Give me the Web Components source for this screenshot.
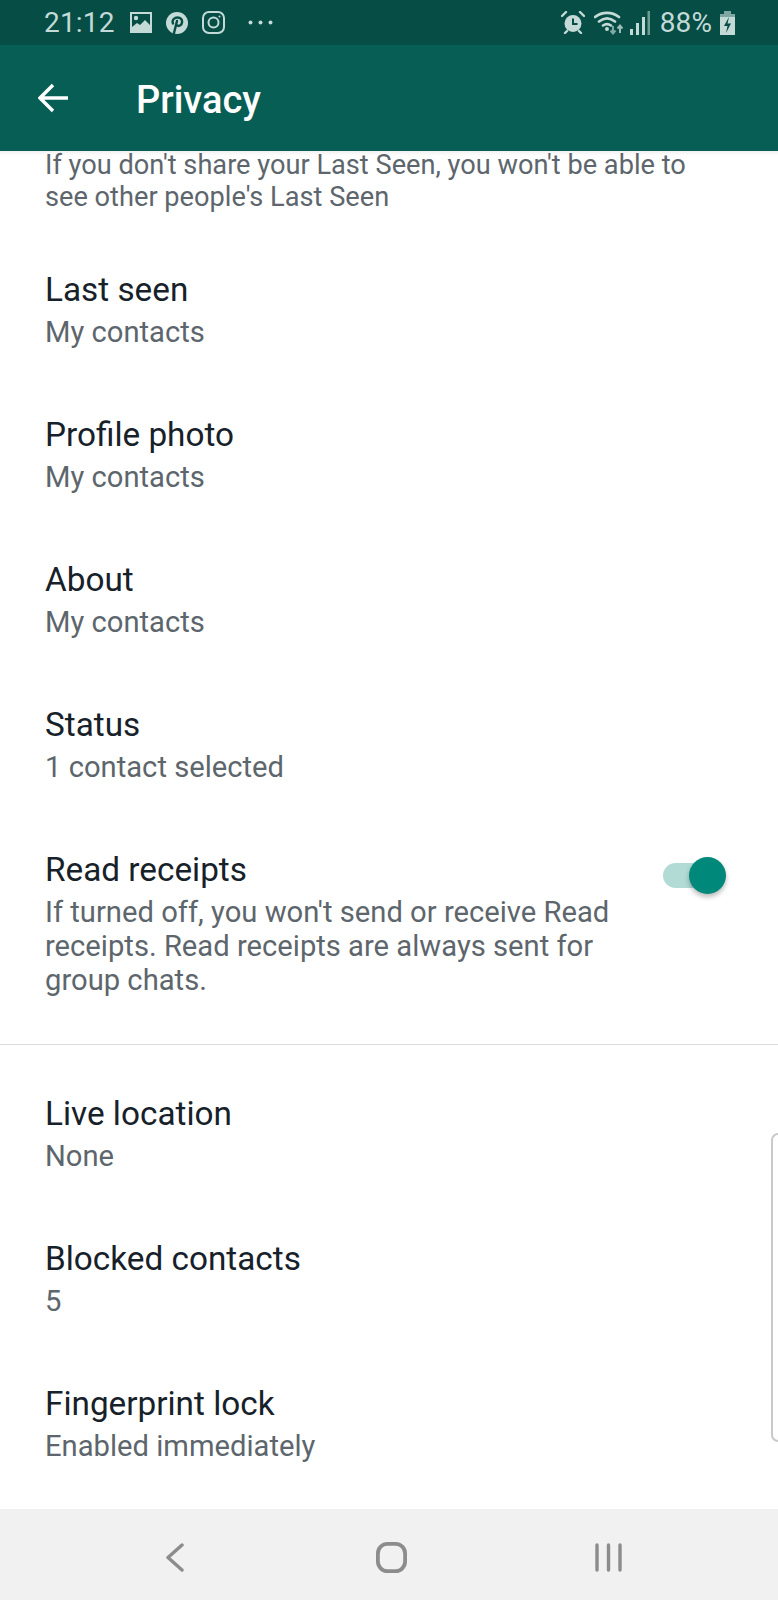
<!DOCTYPE html>
<html>
<head>
<meta charset="utf-8">
<title>Privacy</title>
<style>
html, body { margin: 0; padding: 0; background: #fff; }
body { width: 778px; height: 1600px; overflow: hidden; font-family: Roboto, sans-serif; }
</style>
</head>
<body>
<phone-screen>
  <status-bar slot="top"></status-bar>
  <app-toolbar slot="top">Privacy</app-toolbar>

  <intro-note>If you don't share your Last Seen, you won't be able to see other people's Last Seen</intro-note>

  <privacy-row label="Last seen">My contacts</privacy-row>
  <privacy-row label="Profile photo">My contacts</privacy-row>
  <privacy-row label="About">My contacts</privacy-row>
  <privacy-row label="Status">1 contact selected</privacy-row>
  <privacy-row label="Read receipts">
    If turned off, you won't send or receive Read receipts. Read receipts are always sent for group chats.
    <toggle-switch slot="end"></toggle-switch>
  </privacy-row>
  <list-divider></list-divider>
  <privacy-row label="Live location">None</privacy-row>
  <privacy-row label="Blocked contacts">5</privacy-row>
  <privacy-row label="Fingerprint lock">Enabled immediately</privacy-row>

  <nav-bar slot="bottom"></nav-bar>
</phone-screen>

<script>
class PhoneScreen extends HTMLElement {
  constructor() {
    super();
    this.attachShadow({ mode: "open" }).innerHTML = `
<style>
:host { display: flex; flex-direction: column; width: 778px; height: 1600px; overflow: hidden; background: #fff; }
.list { position: relative; flex: 1; min-height: 0; overflow: hidden; }
.list::before { content: ""; position: absolute; left: 0; right: 0; top: 0; height: 5px; background: linear-gradient(rgba(0,0,0,.06), rgba(0,0,0,0)); z-index: 1; }
.edge { position: absolute; right: 0; top: 982px; width: 5px; height: 305px; border: 2px solid #c9c9c9; border-right: 0; border-radius: 10px 0 0 10px; }
</style>
<slot name="top"></slot>
<div class="list"><slot></slot><div class="edge"></div></div>
<slot name="bottom"></slot>`;
  }
}
customElements.define("phone-screen", PhoneScreen);

class StatusBar extends HTMLElement {
  constructor() {
    super();
    this.attachShadow({ mode: "open" }).innerHTML = `
<style>
:host { display: flex; align-items: center; height: 45px; padding: 0 43px 0 44px; background: #054d45; color: #c3dad6; font-size: 28px; box-sizing: border-box; }
svg { display: block; flex: none; }
.time { width: 72px; line-height: 45px; letter-spacing: .2px; }
.left { display: flex; align-items: center; gap: 14px; flex: 1; }
.right { display: flex; align-items: center; }
.pct { margin: 0 8px 0 10px; line-height: 45px; letter-spacing: .1px; }
</style>
<div class="left">
  <span class="time">21:12</span>
  <svg width="22" height="21" viewBox="0 0 22 21"><path fill="#c3dad6" fill-rule="evenodd" d="M0 0h22v21H0zM2 2v13l5-4 3 2 5-5 5 5V2z"/><circle cx="6" cy="6" r="2.2" fill="#c3dad6"/></svg>
  <svg width="22" height="22" viewBox="0 0 22 22"><circle cx="11" cy="11" r="11" fill="#c3dad6"/><path d="M8 21l3-12M7 11.5C5.5 7.500 9 5.500 11.500 5.500c3 0 5 2 4.500 5-.4 2.500-2.500 4-4.500 3.200-.8-.3-1.200-.9-1.300-1.300" fill="none" stroke="#054d45" stroke-width="2.400" stroke-linecap="round"/></svg>
  <svg width="23" height="23" viewBox="0 0 23 23" fill="none" stroke="#c3dad6" stroke-width="2"><rect x="1" y="1" width="21" height="21" rx="6"/><circle cx="11.500" cy="11.500" r="5"/><circle cx="17.500" cy="5.500" r="1" fill="#c3dad6" stroke="none"/></svg>
  <svg style="margin-left:9px" width="25" height="5" viewBox="0 0 25 5" fill="#c3dad6"><circle cx="2.500" cy="2.500" r="2"/><circle cx="12.500" cy="2.500" r="2"/><circle cx="22.500" cy="2.500" r="2"/></svg>
</div>
<div class="right">
  <svg width="24" height="23" viewBox="0 0 24 23"><circle cx="12" cy="12.500" r="8.500" fill="#c3dad6"/><path d="M12 7.500v5.500h4.500" fill="none" stroke="#054d45" stroke-width="2"/><path d="M1 5l4-4M23 5l-4-4M6 20l-2 2M18 20l2 2" stroke="#c3dad6" stroke-width="2.400" stroke-linecap="round"/></svg>
  <svg style="margin-left:9px" width="29" height="24" viewBox="0 0 29 24" fill="none"><path d="M1 6C8 .5 18 .5 25 6M5 10.500c5-4 11-4 16 0M9 14.500c3-2 5-2 8 0" stroke="#c3dad6" stroke-width="2.600" stroke-linecap="round"/><circle cx="13" cy="18" r="2" fill="#c3dad6"/><path d="M19 15v7m-2.500-2.500l2.500 3 2.500-3" stroke="#7fa8a2" stroke-width="2"/><path d="M26 22v-7m-2.500 2.500l2.500-3 2.500 3" stroke="#9dbcb7" stroke-width="2"/></svg>
  <svg style="margin-left:7px" width="20" height="24" viewBox="0 0 20 24"><rect x="0" y="18" width="3" height="6" fill="#c3dad6"/><rect x="6" y="12" width="3" height="12" fill="#c3dad6"/><rect x="12" y="6" width="3" height="18" fill="#c3dad6"/><rect x="17.500" y="0" width="2.500" height="24" fill="#6f9c95"/></svg>
  <span class="pct">88%</span>
  <svg width="15" height="24" viewBox="0 0 15 24"><rect x="4" y="0" width="7" height="4" fill="#7fa8a2"/><rect x="0" y="3" width="15" height="21" fill="#c3dad6"/><rect x="0" y="3" width="15" height="3" fill="#7fa8a2"/><path d="M9 6l-5 9h3.500L6 22l5-9.500H7.500z" fill="#054d45"/></svg>
</div>`;
  }
}
customElements.define("status-bar", StatusBar);

class AppToolbar extends HTMLElement {
  constructor() {
    super();
    this.attachShadow({ mode: "open" }).innerHTML = `
<style>
:host { display: flex; align-items: center; height: 106px; padding-left: 38px; box-sizing: border-box; background: #075e54; color: #fff; font-size: 38px; font-weight: 500; }
svg { display: block; flex: none; margin-right: 68px; }
span { padding-top: 3px; }
</style>
<svg width="30" height="30" viewBox="0 0 30 30" fill="none" stroke="#fff" stroke-width="3.400"><path d="M30 15H3M15 2L2 15l13 13"/></svg>
<span><slot></slot></span>`;
  }
}
customElements.define("app-toolbar", AppToolbar);

class IntroNote extends HTMLElement {
  constructor() {
    super();
    this.attachShadow({ mode: "open" }).innerHTML = `
<style>
:host { display: block; margin: -2px 0 24px; padding: 0 70px 0 45px; color: #5d666c; font-size: 27.200px; line-height: 32px; }
</style>
<slot></slot>`;
  }
}
customElements.define("intro-note", IntroNote);

class PrivacyRow extends HTMLElement {
  constructor() {
    super();
    this.attachShadow({ mode: "open" }).innerHTML = `
<style>
:host { display: flex; align-items: flex-start; padding: 33px 0 33px 45px; }
.text { width: 580px; }
.title { color: #17212a; font-size: 33.300px; line-height: 40px; margin-bottom: 5px; }
.sub { color: #5d666c; font-size: 29.200px; line-height: 34px; }
</style>
<div class="text">
  <div class="title"></div>
  <div class="sub"><slot></slot></div>
</div>
<slot name="end"></slot>`;
    this.shadowRoot.querySelector(".title").textContent = this.getAttribute("label");
  }
}
customElements.define("privacy-row", PrivacyRow);

class ToggleSwitch extends HTMLElement {
  constructor() {
    super();
    this.attachShadow({ mode: "open" }).innerHTML = `
<style>
:host { display: block; position: relative; width: 63px; height: 37px; margin: 7px 0 0 38px; flex: none; }
.track { position: absolute; left: 0; top: 6px; width: 52px; height: 25px; border-radius: 13px; background: #b2dbd6; }
.thumb { position: absolute; right: 0; top: 0; width: 37px; height: 37px; border-radius: 50%; background: #00897b; box-shadow: 0 3px 5px rgba(0,0,0,.28); }
</style>
<div class="track"></div><div class="thumb"></div>`;
  }
}
customElements.define("toggle-switch", ToggleSwitch);

class ListDivider extends HTMLElement {
  constructor() {
    super();
    this.attachShadow({ mode: "open" }).innerHTML = `
<style>
:host { display: block; height: 1px; margin: 14px 0 16px; background: #dcdcdc; }
</style>`;
  }
}
customElements.define("list-divider", ListDivider);

class NavBar extends HTMLElement {
  constructor() {
    super();
    this.attachShadow({ mode: "open" }).innerHTML = `
<style>
:host { display: grid; grid-template-columns: repeat(3, 217px); align-items: center; justify-items: center; height: 91px; padding: 5px 0 0 66px; box-sizing: border-box; background: #f1f1f1; }
svg { display: block; }
</style>
<svg width="18" height="29" viewBox="0 0 18 29" fill="none" stroke="#8c8c8c" stroke-width="3.400" stroke-linecap="round" stroke-linejoin="round"><path d="M16 2L2 14.500 16 27"/></svg>
<svg width="31" height="31" viewBox="0 0 31 31" fill="none" stroke="#8c8c8c" stroke-width="3.800"><rect x="1.900" y="1.900" width="27.200" height="27.200" rx="9.500"/></svg>
<svg width="27" height="29" viewBox="0 0 27 29" fill="none" stroke="#8c8c8c" stroke-width="3.400" stroke-linecap="round"><path d="M2 2v25M13.500 2v25M25 2v25"/></svg>`;
  }
}
customElements.define("nav-bar", NavBar);
</script>
</body>
</html>
